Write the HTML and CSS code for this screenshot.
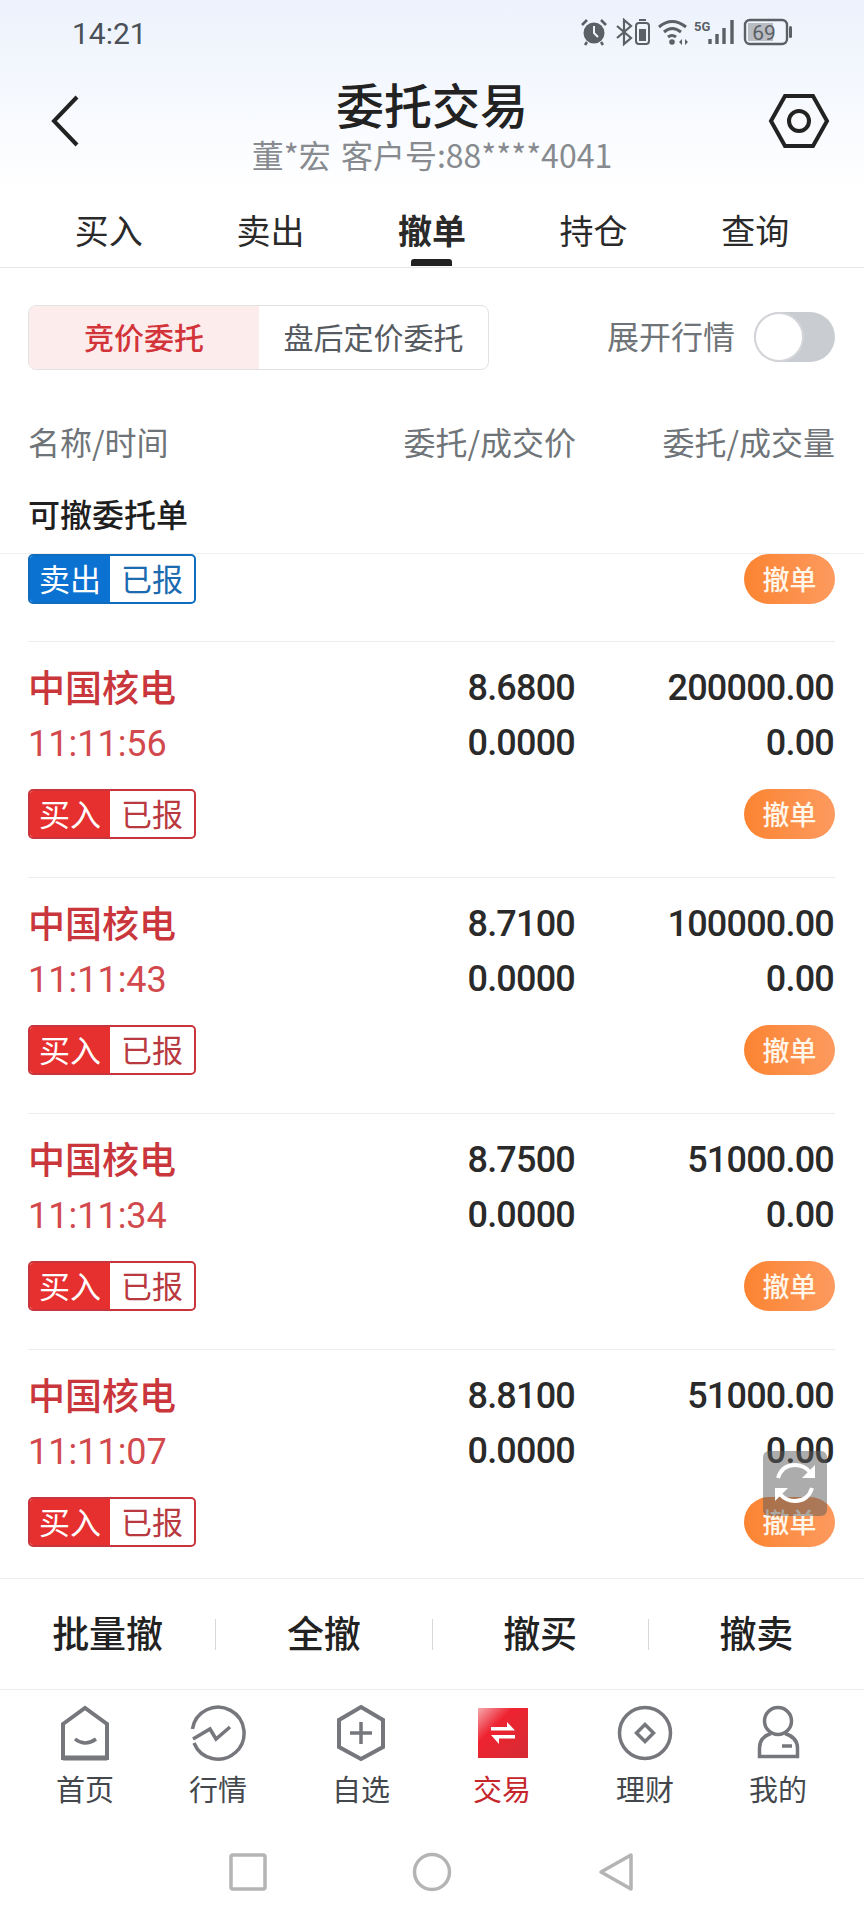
FILE: index.html
```html
<!DOCTYPE html>
<html lang="zh-CN">
<head>
    <meta charset="UTF-8">
    <meta name="viewport" content="width=device-width, initial-scale=1.0">
    <title>委托交易</title>
    <link rel="stylesheet" href="styles.css">
</head>
<body>
<div class="app">
    <header class="top">
        <div class="status">
            <span class="clock">14:21</span>
            <svg class="status-icons" width="211" height="30" viewBox="0 0 211 30">
                <circle cx="13" cy="15" r="10.5" fill="#5b5f66"/>
                <path d="M13 8v7l4 4" fill="none" stroke="#eef3fc" stroke-width="2"/>
                <path d="M1 7l5-5M25 7l-5-5M6 24l-2 3M20 24l2 3" fill="none" stroke="#5b5f66" stroke-width="2.6"/>
                <path d="M36 8l14 12-7 6V2l7 6-14 12" fill="none" stroke="#5b5f66" stroke-width="2.2"/>
                <rect x="55" y="5" width="13" height="21" rx="3" fill="none" stroke="#5b5f66" stroke-width="2"/>
                <rect x="58" y="11" width="7" height="12" fill="#5b5f66"/>
                <path d="M58 2h7" stroke="#5b5f66" stroke-width="2"/>
                <path d="M78 9q13-11 27 0M83 14q8-7 17 0M87 19q4-3 8 0" fill="none" stroke="#5b5f66" stroke-width="3"/>
                <circle cx="91" cy="24" r="2.8" fill="#5b5f66"/>
                <path d="M98 24l3-3v6zM107 24l-3-3v6z" fill="#5b5f66"/>
                <text class="tiny" x="113" y="13">5G</text>
                <path d="M129 21v5M136 16v10M143 10v16M151 2v24" stroke="#5b5f66" stroke-width="3.4"/>
                <rect x="167" y="5" width="25" height="18" fill="#b9bcc2"/>
                <rect x="164" y="2" width="42" height="24" rx="5" fill="none" stroke="#5b5f66" stroke-width="2.4"/>
                <text class="batt" x="183" y="22" text-anchor="middle">69</text>
                <rect x="208" y="8" width="3" height="12" rx="1.5" fill="#5b5f66"/>
            </svg>
        </div>
        <div class="title-bar">
            <svg class="back" width="30" height="52" viewBox="0 0 30 52">
                <path d="M27 2L4 26l23 24" fill="none" stroke="#222" stroke-width="4"/>
            </svg>
            <div class="title-text">
                <h1>委托交易</h1>
                <p>董*宏 客户号:88****4041</p>
            </div>
            <svg class="gear" width="62" height="56" viewBox="0 0 62 56">
                <path d="M3 28L17 3h28l14 25-14 25H17z" fill="none" stroke="#222" stroke-width="4"/>
                <circle cx="31" cy="28" r="10" fill="none" stroke="#222" stroke-width="4"/>
            </svg>
        </div>
        <nav class="tabs">
            <a>买入</a>
            <a>卖出</a>
            <a class="on">撤单</a>
            <a>持仓</a>
            <a>查询</a>
        </nav>
    </header>

    <div class="filter">
        <div class="segment">
            <span class="seg on">竞价委托</span>
            <span class="seg">盘后定价委托</span>
        </div>
        <div class="expand">
            <span>展开行情</span>
            <div class="switch"><i></i></div>
        </div>
    </div>

    <div class="cols head-cols">
        <span>名称/时间</span>
        <span class="num">委托/成交价</span>
        <span class="num">委托/成交量</span>
    </div>
    <div class="group-title">可撤委托单</div>

    <div class="list">
        <div class="order-foot cut">
            <div class="badge sell"><b>卖出</b><span>已报</span></div>
            <button class="cancel">撤单</button>
        </div>

        <div class="order">
            <div class="cols">
                <span class="name">中国核电</span>
                <span class="num">8.6800</span>
                <span class="num">200000.00</span>
                <span class="time">11:11:56</span>
                <span class="num">0.0000</span>
                <span class="num">0.00</span>
            </div>
            <div class="order-foot">
                <div class="badge"><b>买入</b><span>已报</span></div>
                <button class="cancel">撤单</button>
            </div>
        </div>

        <div class="order">
            <div class="cols">
                <span class="name">中国核电</span>
                <span class="num">8.7100</span>
                <span class="num">100000.00</span>
                <span class="time">11:11:43</span>
                <span class="num">0.0000</span>
                <span class="num">0.00</span>
            </div>
            <div class="order-foot">
                <div class="badge"><b>买入</b><span>已报</span></div>
                <button class="cancel">撤单</button>
            </div>
        </div>

        <div class="order">
            <div class="cols">
                <span class="name">中国核电</span>
                <span class="num">8.7500</span>
                <span class="num">51000.00</span>
                <span class="time">11:11:34</span>
                <span class="num">0.0000</span>
                <span class="num">0.00</span>
            </div>
            <div class="order-foot">
                <div class="badge"><b>买入</b><span>已报</span></div>
                <button class="cancel">撤单</button>
            </div>
        </div>

        <div class="order">
            <div class="cols">
                <span class="name">中国核电</span>
                <span class="num">8.8100</span>
                <span class="num">51000.00</span>
                <span class="time">11:11:07</span>
                <span class="num">0.0000</span>
                <span class="num">0.00</span>
            </div>
            <div class="order-foot">
                <div class="badge"><b>买入</b><span>已报</span></div>
                <button class="cancel">撤单</button>
            </div>
        </div>
    </div>

    <div class="actions">
        <a>批量撤</a><i></i>
        <a>全撤</a><i></i>
        <a>撤买</a><i></i>
        <a>撤卖</a>
    </div>

    <nav class="bottom-nav">
        <a>
            <svg width="60" height="60" viewBox="0 0 60 60">
                <path d="M8 21L30 5l22 16v34H8z" fill="none" stroke="#76777c" stroke-width="4"/>
                <path d="M8 55h44" stroke="#76777c" stroke-width="5"/>
                <path d="M20 36q10 8 21 0" fill="none" stroke="#76777c" stroke-width="3.5"/>
            </svg>
            <span>首页</span>
        </a>
        <a>
            <svg width="60" height="60" viewBox="0 0 60 60">
                <path d="M4.400 26A26 26 0 1 1 6 40" fill="none" stroke="#76777c" stroke-width="3.5"/>
                <path d="M5 36l17-10 6 10 14-12" fill="none" stroke="#76777c" stroke-width="3.5"/>
            </svg>
            <span>行情</span>
        </a>
        <a>
            <svg width="60" height="60" viewBox="0 0 60 60">
                <path d="M30 4l22 13v27L30 56 8 44V17z" fill="none" stroke="#76777c" stroke-width="4"/>
                <path d="M19 30h22M30 19v22" stroke="#76777c" stroke-width="3.5"/>
            </svg>
            <span>自选</span>
        </a>
        <a class="on">
            <svg width="60" height="60" viewBox="0 0 60 60">
                <defs>
                    <linearGradient id="tradeBg" x1="0" y1="0" x2="1" y2="1">
                        <stop offset="0" stop-color="#f5a9ae"/>
                        <stop offset="0.35" stop-color="#ee2330"/>
                        <stop offset="1" stop-color="#d42c34"/>
                    </linearGradient>
                </defs>
                <rect x="6" y="5" width="50" height="50" fill="url(#tradeBg)"/>
                <path d="M19 24h16v-5l8 8.500H19zM43 32v3.500H27V41l-8-9z" fill="#fff"/>
            </svg>
            <span>交易</span>
        </a>
        <a>
            <svg width="60" height="60" viewBox="0 0 60 60">
                <circle cx="30" cy="30" r="25.500" fill="none" stroke="#76777c" stroke-width="3.5"/>
                <path d="M30 21.500l8.500 8.500-8.500 8.500-8.500-8.500z" fill="none" stroke="#76777c" stroke-width="3.5"/>
            </svg>
            <span>理财</span>
        </a>
        <a>
            <svg width="60" height="60" viewBox="0 0 60 60">
                <circle cx="30" cy="18" r="13.500" fill="none" stroke="#76777c" stroke-width="3.5"/>
                <path d="M23 30.500C15 33 11.500 38 11.500 45v8.500h38V45C49.500 38 45 33 37 30.500" fill="none" stroke="#76777c" stroke-width="3.5"/>
                <path d="M34 43h10" stroke="#76777c" stroke-width="3.5"/>
            </svg>
            <span>我的</span>
        </a>
    </nav>

    <div class="sys-nav">
        <svg width="40" height="40" viewBox="0 0 40 40">
            <rect x="3" y="3" width="34" height="34" rx="2" fill="none" stroke="#b4b4b4" stroke-width="3.5"/>
        </svg>
        <svg width="40" height="40" viewBox="0 0 40 40">
            <circle cx="20" cy="20" r="17.500" fill="none" stroke="#b4b4b4" stroke-width="3.5"/>
        </svg>
        <svg width="40" height="40" viewBox="0 0 40 40">
            <path d="M35 3v34L5 20z" fill="none" stroke="#b4b4b4" stroke-width="3.5" stroke-linejoin="round"/>
        </svg>
    </div>

    <!-- refresh button floats over the list -->
    <div class="refresh">
        <svg width="64" height="64" viewBox="0 0 64 64">
            <path d="M15 27q4-13 17-13 9 0 15 7" fill="none" stroke="#fff" stroke-width="4"/>
            <path d="M52 14v13H39z" fill="#fff"/>
            <path d="M49 37q-4 13-17 13-9 0-15-7" fill="none" stroke="#fff" stroke-width="4"/>
            <path d="M12 50V37h13z" fill="#fff"/>
        </svg>
    </div>
</div>
</body>
</html>
```

FILE: styles.css
```css
* {
    box-sizing: border-box;
}

html, body {
    margin: 0;
    padding: 0;
    background: #fff;
}

body {
    font-family: "Noto Sans CJK SC", "Noto Sans", sans-serif;
    color: #1f1f1f;
}

.app {
    position: relative;
    display: flex;
    flex-direction: column;
    width: 864px;
    height: 1920px;
    overflow: hidden;
}

/* top area */
.top {
    background: linear-gradient(#ecf2fc, #fff 190px);
}

.status {
    display: flex;
    justify-content: space-between;
    align-items: center;
    height: 66px;
    padding: 0 72px 0 72px;
}

.clock {
    font-family: Roboto, sans-serif;
    font-size: 30px;
    color: #4a5058;
}

.title-bar {
    display: grid;
    grid-template-columns: 1fr auto 1fr;
    align-items: center;
    height: 124px;
    padding: 0 34px 15px 34px;
}

.back {
    margin-left: 16px;
}

.gear {
    justify-self: end;
}

.title-text {
    padding-top: 7px;
    text-align: center;
}

.title-text h1 {
    margin: 0;
    font-size: 48px;
    line-height: 54px;
    font-weight: 500;
    color: #222;
}

.title-text p {
    margin: 5px 0 0;
    font-size: 32px;
    line-height: 38px;
    color: #878b90;
    word-spacing: 3px;
    white-space: nowrap;
}

.tabs {
    display: grid;
    grid-template-columns: repeat(5, 1fr);
    padding: 17px 28px 0;
    height: 78px;
    border-bottom: 1px solid #e8e8e8;
}

.tabs a {
    text-align: center;
    font-size: 34px;
    line-height: 46px;
    color: #2a2a2a;
}

.tabs a.on {
    font-weight: 700;
}

.tabs a.on::after {
    content: "";
    display: block;
    width: 41px;
    height: 7px;
    margin: 6px auto 0;
    background: #222;
    border-radius: 3px 3px 0 0;
}

/* filter row */
.filter {
    display: flex;
    justify-content: space-between;
    align-items: center;
    padding: 37px 29px 0 28px;
}

.segment {
    display: flex;
    width: 461px;
    height: 65px;
    border: 1px solid #e2e2e2;
    border-radius: 8px;
    overflow: hidden;
}

.seg {
    flex: 1;
    display: flex;
    align-items: center;
    justify-content: center;
    padding-bottom: 3px;
    font-size: 30px;
    color: #555a60;
}

.seg.on {
    flex: 0 0 230px;
    background: #fdecec;
    color: #d2343a;
    font-weight: 500;
}

.expand {
    display: flex;
    align-items: center;
    gap: 19px;
    padding-bottom: 2px;
    font-size: 32px;
    color: #6f7478;
}

.expand span {
    padding-bottom: 4px;
}

.switch {
    width: 81px;
    height: 50px;
    border-radius: 25px;
    background: #c9ccd1;
}

.switch i {
    display: block;
    width: 50px;
    height: 50px;
    border-radius: 50%;
    background: #fff;
    border: 2px solid #d3d5d9;
}

/* columns shared by header and orders */
.cols {
    display: grid;
    grid-template-columns: 300px 248px 259px;
    grid-auto-rows: 46px;
    row-gap: 9px;
    align-items: center;
    line-height: 46px;
}

.num {
    padding-right: 1px;
    text-align: right;
    font-family: Roboto, "Noto Sans CJK SC", sans-serif;
    font-size: 36px;
    letter-spacing: -0.8px;
    font-weight: 500;
    color: #2a2a2a;
}

.head-cols {
    margin: 48px 29px 0 28px;
    font-size: 32px;
    color: #6f7478;
}

.head-cols .num {
    padding-right: 0;
    font-family: "Noto Sans CJK SC", sans-serif;
    font-size: 32px;
    font-weight: 400;
    letter-spacing: 0;
    color: #6f7478;
}

.group-title {
    margin-top: 26px;
    padding: 0 28px 17px;
    font-size: 32px;
    line-height: 46px;
    font-weight: 500;
    color: #1f1f1f;
}

/* order list */
.list {
    flex: 1;
    min-height: 0;
    overflow: hidden;
    border-top: 1px solid #efefef;
}

.order {
    margin: 0 29px 0 28px;
    padding: 23px 0 38px;
    border-top: 1px solid #ececec;
}

.name {
    padding-bottom: 5px;
    font-size: 37px;
    font-weight: 500;
    color: #c9363c;
}

.time {
    padding-top: 2px;
    font-family: Roboto, sans-serif;
    font-size: 36px;
    color: #d2494d;
}

.order-foot {
    display: flex;
    justify-content: space-between;
    margin-top: 23px;
}

.order-foot.cut {
    margin: 0 29px 37px 28px;
}

.badge {
    display: flex;
    width: 168px;
    height: 50px;
    border: 2px solid #c9353a;
    border-radius: 5px;
    overflow: hidden;
    font-size: 31px;
    line-height: 44px;
    color: #b83a40;
}

.badge b {
    flex: 0 0 80px;
    text-align: center;
    font-weight: 400;
    background: #e5302f;
    color: #fff;
}

.badge span {
    flex: 1;
    text-align: center;
}

.badge.sell {
    border-color: #0e6dbf;
    color: #1c6bb0;
}

.badge.sell b {
    background: #0b72d2;
}

.cancel {
    width: 91px;
    height: 50px;
    padding: 0 0 2px;
    border: none;
    border-radius: 25px;
    background: linear-gradient(to right, #fb8431, #fd9a5f);
    color: #fff6ea;
    font-family: inherit;
    font-size: 27px;
    font-weight: 500;
}

/* bottom bars */
.actions {
    display: flex;
    align-items: center;
    flex: 0 0 111px;
    background: #fff;
    border-top: 1px solid #ececec;
}

.actions a {
    flex: 1;
    padding-bottom: 5px;
    text-align: center;
    font-size: 37px;
    font-weight: 500;
    color: #222;
}

.actions i {
    width: 1px;
    height: 31px;
    background: #d8d8d8;
}

.bottom-nav {
    display: grid;
    grid-template-columns: 134px 132px 154px 128px 158px 108px;
    padding: 13px 0 0 18px;
    border-top: 1px solid #ececec;
}

.bottom-nav a {
    display: flex;
    flex-direction: column;
    align-items: center;
    font-size: 29px;
    line-height: 40px;
    color: #44484d;
}

.bottom-nav a span {
    margin-top: 5px;
}

.bottom-nav a.on {
    color: #c5262c;
}

.sys-nav {
    display: flex;
    justify-content: center;
    gap: 144px;
    margin-top: 44px;
    height: 68px;
}

.refresh {
    position: absolute;
    left: 763px;
    top: 1451px;
    width: 64px;
    height: 65px;
    border-radius: 6px;
    background: rgba(90, 90, 90, 0.5);
}

/* status bar text */
.tiny {
    font-family: Roboto, sans-serif;
    font-size: 13px;
    font-weight: 700;
    fill: #5b5f66;
}

.batt {
    font-family: Roboto, sans-serif;
    font-size: 21px;
    fill: #5b5f66;
}
```
